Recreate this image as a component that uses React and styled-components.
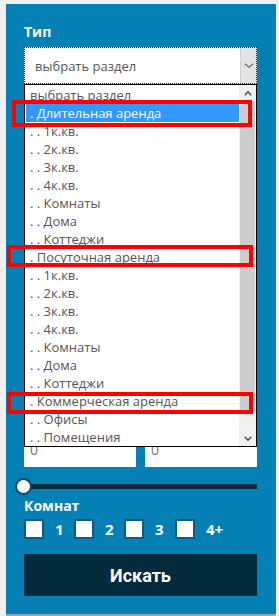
import React from 'react';
import styled, { createGlobalStyle } from 'styled-components';

const GlobalStyle = createGlobalStyle`
  html, body { margin: 0; padding: 0; background: #f0f0f0; }
  body { font-family: "Open Sans", "Liberation Sans", sans-serif; }
  *, *::before, *::after { box-sizing: border-box; }
`;

const Page = styled.div`
  padding: 4px 3px 0 6px;
`;

const BottomRule = styled.div`
  height: 2px;
  background: #a3a3a3;
`;

const Panel = styled.form`
  background: #0580b4;
  padding: 19px 19px 18px 18px;
  display: flex;
  flex-direction: column;
`;

const FieldLabel = styled.div`
  color: #fff;
  font-family: "Open Sans", "Liberation Sans", sans-serif;
  font-weight: 700;
  font-size: 14px;
  line-height: 18px;
  margin-top: ${p => p.$mt || 0}px;
`;

const SelectWrap = styled.div`
  position: relative;
  margin-top: 6px;
`;

const SelectBox = styled.div`
  height: 37px;
  background: #fff;
  border: 1px dotted #222;
  display: flex;
  align-items: stretch;
`;

const SelectText = styled.div`
  flex: 1;
  padding-left: 10px;
  display: flex;
  align-items: center;
  color: #555;
  font-size: 13px;
`;

const SelectArrow = styled.div`
  width: 16px;
  background: #e3e3e3;
  border-left: 1px solid #cfcfcf;
  display: flex;
  align-items: center;
  justify-content: center;
`;

const Dropdown = styled.div`
  position: absolute;
  top: 37px;
  left: 0;
  right: 0;
  height: 363px;
  background: #fff;
  border: 1px solid #000;
  display: flex;
  z-index: 5;
`;

const Options = styled.ul`
  list-style: none;
  margin: 0;
  padding: 1px 0 0;
  flex: 1;
  overflow: hidden;
`;

const Option = styled.li`
  height: 18px;
  line-height: 18px;
  margin-left: 1px;
  padding-left: 4px;
  font-size: 13px;
  white-space: nowrap;
  color: ${p => (p.$active ? '#fff' : '#555')};
  background: ${p => (p.$active ? '#3399ff' : 'transparent')};
`;

const Scrollbar = styled.div`
  width: 17px;
  background: #f0f0f0;
  display: flex;
  flex-direction: column;
`;

const ScrollBtn = styled.div`
  height: 16px;
  display: flex;
  align-items: center;
  justify-content: center;
`;

const ScrollThumb = styled.div`
  height: 309px;
  margin: 0 1px;
  background: #cdcdcd;
`;

const ScrollSpace = styled.div`
  flex: 1;
`;

const Annotation = styled.div`
  position: absolute;
  border: 4px solid #ff0000;
  z-index: 6;
  pointer-events: none;
`;

const PriceRow = styled.div`
  margin-top: 347px;
  display: grid;
  grid-template-columns: 1fr 1fr;
  gap: 9px;
`;

const PriceInput = styled.input`
  height: 36px;
  border: none;
  outline: none;
  background: #fff;
  padding: 0 6px;
  font-family: "Open Sans", "Liberation Sans", sans-serif;
  font-size: 14px;
  color: #333;
  min-width: 0;
  &::placeholder { color: #777; }
`;

const Slider = styled.div`
  position: relative;
  margin-top: 11px;
  height: 17px;
  display: flex;
  align-items: center;
`;

const SliderTrack = styled.div`
  flex: 1;
  height: 5px;
  background: #032a3d;
`;

const SliderThumb = styled.div`
  position: absolute;
  left: -9px;
  top: 0;
  width: 17px;
  height: 17px;
  border-radius: 50%;
  background: #fff;
  border: 2px solid #0b4a6c;
`;

const CheckRow = styled.div`
  margin-top: 4px;
  display: flex;
`;

const CheckItem = styled.label`
  width: ${p => p.$w}px;
  display: flex;
  align-items: center;
  gap: 11px;
  color: #fff;
  font-weight: 700;
  font-size: 15px;
  line-height: 20px;
`;

const CheckBox = styled.span`
  width: 20px;
  height: 20px;
  background: #fff;
  border: 2px solid #0d5a84;
  flex: none;
`;

const SubmitButton = styled.button`
  margin-top: 15px;
  height: 42px;
  border: none;
  background: #032a3d;
  color: #fff;
  font-family: Roboto, "Liberation Sans", sans-serif;
  font-weight: 700;
  font-size: 18px;
  cursor: pointer;
`;

const Chevron = ({ up, w = 8, h = 5, color = '#505050', sw = 1.6 }) => (
  <svg width={w} height={h} viewBox={`0 0 ${w} ${h}`}>
    <polyline
      points={up ? `0.8,${h - 0.8} ${w / 2},0.8 ${w - 0.8},${h - 0.8}` : `0.8,0.8 ${w / 2},${h - 0.8} ${w - 0.8},0.8`}
      fill="none"
      stroke={color}
      strokeWidth={sw}
    />
  </svg>
);

const options = [
  { t: 'выбрать раздел' },
  { t: '. Длительная аренда', active: true },
  { t: '. . 1к.кв.' },
  { t: '. . 2к.кв.' },
  { t: '. . 3к.кв.' },
  { t: '. . 4к.кв.' },
  { t: '. . Комнаты' },
  { t: '. . Дома' },
  { t: '. . Коттеджи' },
  { t: '. Посуточная аренда' },
  { t: '. . 1к.кв.' },
  { t: '. . 2к.кв.' },
  { t: '. . 3к.кв.' },
  { t: '. . 4к.кв.' },
  { t: '. . Комнаты' },
  { t: '. . Дома' },
  { t: '. . Коттеджи' },
  { t: '. Коммерческая аренда' },
  { t: '. . Офисы' },
  { t: '. . Помещения' },
];

const annotations = [
  { left: -12, top: 53, width: 240, height: 27 },
  { left: -17, top: 198, width: 246, height: 22 },
  { left: -17, top: 345, width: 246, height: 22 },
];

const rooms = [
  { n: '1', w: 50 },
  { n: '2', w: 50 },
  { n: '3', w: 51 },
  { n: '4+', w: 50 },
];

export default function App() {
  return (
    <>
      <GlobalStyle />
      <Page>
        <Panel onSubmit={e => e.preventDefault()}>
          <FieldLabel>Тип</FieldLabel>
          <SelectWrap>
            <SelectBox>
              <SelectText>выбрать раздел</SelectText>
              <SelectArrow>
                <Chevron w={10} h={5} color="#666" sw={1.1} />
              </SelectArrow>
            </SelectBox>
            <Dropdown>
              <Options>
                {options.map((o, i) => (
                  <Option key={i} $active={o.active}>{o.t}</Option>
                ))}
              </Options>
              <Scrollbar>
                <ScrollBtn><Chevron up w={8} h={5} /></ScrollBtn>
                <ScrollThumb />
                <ScrollSpace />
                <ScrollBtn><Chevron w={8} h={5} /></ScrollBtn>
              </Scrollbar>
            </Dropdown>
            {annotations.map((a, i) => (
              <Annotation key={i} style={a} />
            ))}
          </SelectWrap>
          <PriceRow>
            <PriceInput placeholder="0" />
            <PriceInput placeholder="0" />
          </PriceRow>
          <Slider>
            <SliderTrack />
            <SliderThumb />
          </Slider>
          <FieldLabel $mt={2}>Комнат</FieldLabel>
          <CheckRow>
            {rooms.map(r => (
              <CheckItem key={r.n} $w={r.w}>
                <CheckBox />
                {r.n}
              </CheckItem>
            ))}
          </CheckRow>
          <SubmitButton type="submit">Искать</SubmitButton>
        </Panel>
        <BottomRule />
      </Page>
    </>
  );
}
